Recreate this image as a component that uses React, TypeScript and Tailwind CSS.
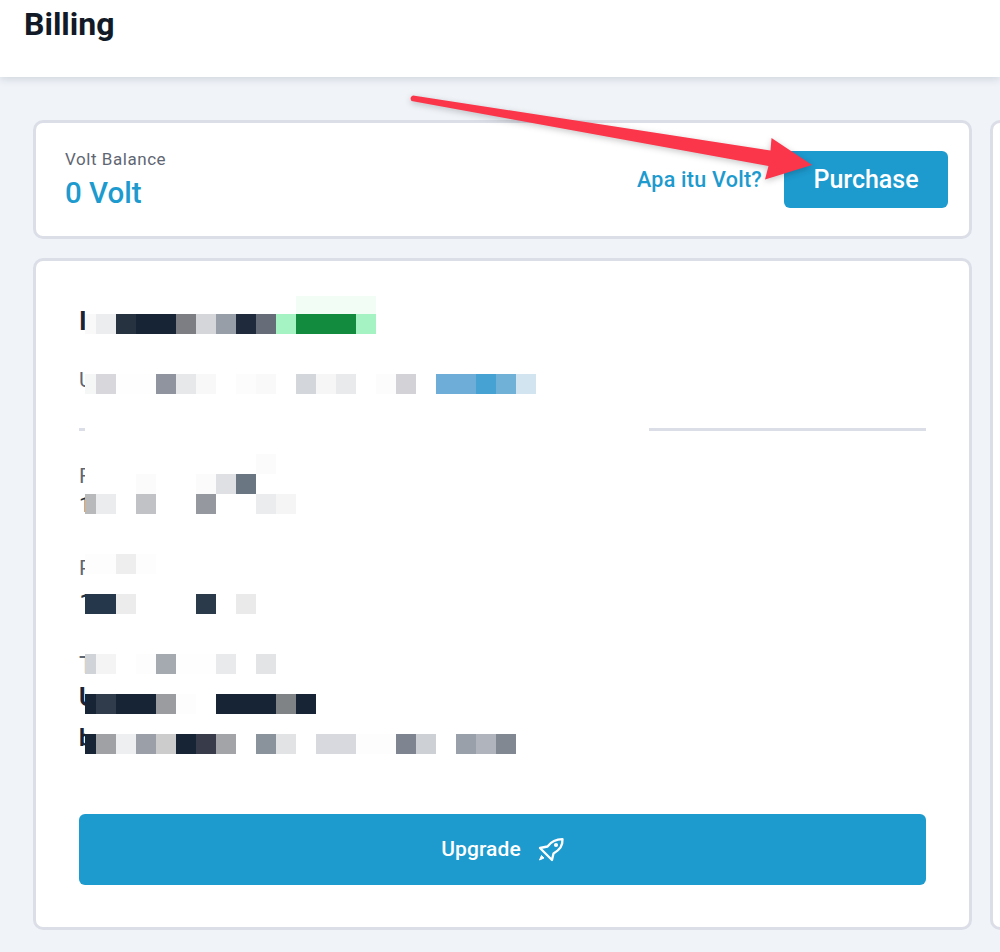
type Cell = [number, string]

// mosaic rows that hide the account details, each cell is a width + colour
const planRow: Cell[] = [
  [11, 'bg-[#f9f9fa]'], [20, 'bg-[#ecedef]'], [20, 'bg-[#26323f]'], [40, 'bg-[#172436]'], [20, 'bg-[#7c7e83]'],
  [20, 'bg-[#d5d6da]'], [20, 'bg-[#989ea8]'], [20, 'bg-[#1f2b3d]'], [20, 'bg-[#666d78]'], [20, 'bg-[#a5f2c2]'],
  [60, 'bg-[#128b3e]'], [20, 'bg-[#a5f2c2]'],
]
const usageRow: Cell[] = [
  [11, 'bg-[#f5f6f6]'], [20, 'bg-[#d8d8dc]'], [40, 'bg-[#fefefe]'], [20, 'bg-[#90949e]'], [20, 'bg-[#e7e8e9]'],
  [20, 'bg-[#f8f8f8]'], [20, 'bg-white'], [20, 'bg-[#fcfcfc]'], [20, 'bg-[#f9f9f9]'], [20, 'bg-white'],
  [20, 'bg-[#d3d6db]'], [20, 'bg-[#f6f6f6]'], [20, 'bg-[#e9eaeb]'], [20, 'bg-white'], [20, 'bg-[#fcfcfc]'],
  [20, 'bg-[#d3d3d7]'], [20, 'bg-white'], [40, 'bg-[#6eadd7]'], [20, 'bg-[#46a2d2]'], [20, 'bg-[#6fb1d7]'],
  [20, 'bg-[#d2e4f0]'],
]
const priceTop: Cell[] = [
  [171, 'bg-white'], [20, 'bg-[#fbfbfb]'],
]
const priceMid: Cell[] = [
  [51, 'bg-white'], [20, 'bg-[#fbfbfb]'], [40, 'bg-white'], [20, 'bg-[#fbfbfb]'], [20, 'bg-[#dfe0e4]'], [20, 'bg-[#6b7683]'],
]
const priceLow: Cell[] = [
  [11, 'bg-[#b8b9bb]'], [20, 'bg-[#ebecee]'], [20, 'bg-white'], [20, 'bg-[#c1c2c6]'], [40, 'bg-white'], [20, 'bg-[#95989f]'],
  [40, 'bg-white'], [20, 'bg-[#ebecee]'], [20, 'bg-[#f5f5f6]'],
]
const renewTop: Cell[] = [
  [31, 'bg-[#fdfdfd]'], [20, 'bg-[#eeeeee]'], [20, 'bg-[#fdfdfd]'],
]
const renewLow: Cell[] = [
  [31, 'bg-[#25384b]'], [20, 'bg-[#ececec]'], [60, 'bg-white'], [20, 'bg-[#2a3a4b]'], [20, 'bg-white'], [20, 'bg-[#eaeaea]'],
]
const termsTop: Cell[] = [
  [11, 'bg-[#d0d3d8]'], [20, 'bg-[#f4f4f5]'], [20, 'bg-white'], [20, 'bg-[#fdfdfd]'], [20, 'bg-[#a5a9b0]'],
  [40, 'bg-[#fefefe]'], [20, 'bg-[#e9eaec]'], [20, 'bg-white'], [20, 'bg-[#e3e4e6]'],
]
const termsMid: Cell[] = [
  [11, 'bg-[#172436]'], [20, 'bg-[#303c4c]'], [40, 'bg-[#172436]'], [20, 'bg-[#9b9c9f]'], [20, 'bg-[#fdfdfd]'], [20, 'bg-white'],
  [60, 'bg-[#172436]'], [20, 'bg-[#808386]'], [20, 'bg-[#172436]'],
]
const termsLow: Cell[] = [
  [11, 'bg-[#172436]'], [20, 'bg-[#a0a1a5]'], [20, 'bg-[#eeeff1]'], [20, 'bg-[#9ba0a8]'], [20, 'bg-[#cccccc]'], [20, 'bg-[#172436]'],
  [20, 'bg-[#383c4a]'], [20, 'bg-[#a3a4a7]'], [20, 'bg-white'], [20, 'bg-[#8a929b]'], [20, 'bg-[#e2e3e5]'], [20, 'bg-white'],
  [40, 'bg-[#d8d9de]'], [40, 'bg-[#fdfdfd]'], [20, 'bg-[#7f8590]'], [20, 'bg-[#cdd0d5]'], [20, 'bg-white'],
  [20, 'bg-[#99a0aa]'], [20, 'bg-[#b0b4bc]'], [20, 'bg-[#818892]'],
]

function Mosaic({ cells }: { cells: Cell[] }) {
  return (
    <div className="flex h-5">
      {cells.map(([width, color], i) => (
        <div key={i} className={color} style={{ width }} />
      ))}
    </div>
  )
}

// one text line: the sliver of the first letter that the blur leaves, then the mosaic
function Line({ letter, cells, letterClass }: { letter: string; cells: Cell[]; letterClass: string }) {
  return (
    <div className="flex h-5 items-center">
      <div className={`w-[6px] shrink-0 overflow-hidden leading-[30px] ${letterClass}`}>{letter}</div>
      <Mosaic cells={cells} />
    </div>
  )
}

function Arrow() {
  return (
    <svg className="pointer-events-none absolute left-[400px] top-[85px] drop-shadow-[0_2px_3px_rgba(0,0,0,0.22)]" width="430" height="105" viewBox="400 85 430 105">
      <path
        d="M413 95.5 L770.5 150.5 L771.5 138 L812 165 L765 179.5 L768.5 166 L411.5 101 Q409 97 413 95.5 Z"
        fill="#fb354a"
      />
    </svg>
  )
}

function RocketIcon() {
  return (
    <svg width="26" height="24" viewBox="0 0 26 24" fill="none" stroke="white" strokeWidth="2.3" strokeLinejoin="round">
      {/* Body and fins */}
      <path d="M24.5 1.2 C18 1.2 13.5 3.2 9.5 8.5 L2 10 L14 22 L15.5 15.5 C22 11.5 24.8 8 24.5 1.2 Z" />
      {/* Window */}
      <circle cx="18" cy="7" r="2.1" fill="white" stroke="none" />
      {/* Flame */}
      <path d="M3.5 17.5 L6 20 L1.5 22 Z" fill="white" stroke="white" strokeWidth="1" />
    </svg>
  )
}

export default function App() {
  return (
    <div className="relative h-[952px] w-[1000px] overflow-hidden bg-[#f0f4f9] font-['Roboto',sans-serif]">
      <header className="h-[77px] bg-white pl-6 pt-[5px] shadow-[0_2px_8px_rgba(30,40,60,0.16)]">
        <h1 className="text-[32px] font-bold leading-[38px] text-[#111a26]">Billing</h1>
      </header>

      <main className="flex gap-[18px] pl-[33px] pt-[43px]">
        <div className="flex w-[939px] shrink-0 flex-col gap-[19px]">
          <section className="flex h-[119px] items-center justify-between rounded-[10px] border-[3px] border-[#dcdee7] bg-white pl-[29px] pr-[21px]">
            <div>
              <p className="text-[17px] leading-[20px] tracking-[0.55px] text-[#5f6673]">Volt Balance</p>
              <p className="mt-[7px] text-[29.5px] font-medium leading-[34px] text-[#1d9ace]">0 Volt</p>
            </div>
            <div className="flex items-center gap-[22px]">
              <a className="text-[21.5px] font-medium leading-6 tracking-[0.25px] text-[#1d9ace]">Apa itu Volt?</a>
              <button className="h-[57px] w-[164px] rounded-[6px] bg-[#1d9ace] text-[25px] font-medium text-white">Purchase</button>
            </div>
          </section>

          <section className="h-[672px] rounded-[10px] border-[3px] border-[#dcdee7] bg-white pl-[43px] pr-[43px] pt-[35px]">
            <div className="ml-[217px] h-[18px] w-20 bg-[#f2fdf5]" />
            <Line letter="I" cells={planRow} letterClass="-translate-y-[3px] text-[26px] font-bold text-[#172436]" />

            <div className="mt-10">
              <Line letter="U" cells={usageRow} letterClass="-translate-y-[4px] text-[21px] text-[#5f6673]" />
            </div>

            <div className="mt-[34px] flex h-[3px]">
              <div className="w-[6px] bg-[#dcdee7]" />
              <div className="w-[564px]" />
              <div className="flex-1 bg-[#dcdee7]" />
            </div>

            <div className="mt-[23px]">
              <Mosaic cells={[[6, 'bg-white'], ...priceTop]} />
              <Line letter="F" cells={priceMid} letterClass="-translate-y-[8px] text-[21px] text-[#5f6673]" />
              <Line letter="1" cells={priceLow} letterClass="translate-y-[1px] text-[21px] text-[#26323f]" />
            </div>

            <div className="mt-10">
              <Line letter="P" cells={renewTop} letterClass="translate-y-[4px] text-[21px] text-[#5f6673]" />
              <div className="h-5" />
              <Line letter="1" cells={renewLow} letterClass="text-[28px] text-[#26323f]" />
            </div>

            <div className="mt-10">
              <Line letter="T" cells={termsTop} letterClass="translate-y-[1px] text-[24px] text-[#5f6673]" />
              <div className="h-5" />
              <Line letter="U" cells={termsMid} letterClass="-translate-y-[6px] text-[25px] font-bold text-[#172436]" />
              <div className="h-5" />
              <Line letter="b" cells={termsLow} letterClass="-translate-y-[6px] text-[24px] font-bold text-[#172436]" />
            </div>

            <button className="mt-[60px] flex h-[71px] w-full items-center justify-center gap-[17px] rounded-[6px] bg-[#1d9ace] text-[21px] font-medium tracking-[0.1px] text-white">
              Upgrade
              <RocketIcon />
            </button>
          </section>
        </div>

        <section className="h-[810px] w-[200px] shrink-0 rounded-[10px] border-[3px] border-[#dcdee7] bg-white" />
      </main>

      <Arrow />
    </div>
  )
}
